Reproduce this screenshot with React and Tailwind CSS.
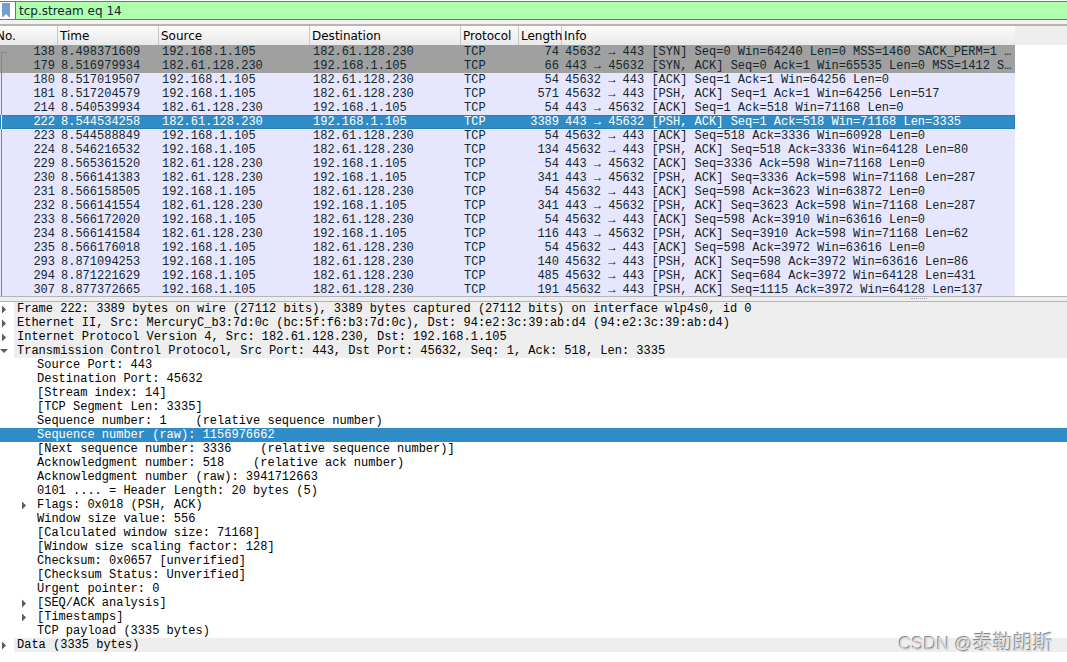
import React, { useState } from 'react';

const A = '192.168.1.105';
const B = '182.61.128.230';

const packets = [
  { no: 138, time: '8.498371609', src: A, dst: B, length: 74, info: '45632 → 443 [SYN] Seq=0 Win=64240 Len=0 MSS=1460 SACK_PERM=1 …', syn: true },
  { no: 179, time: '8.516979934', src: B, dst: A, length: 66, info: '443 → 45632 [SYN, ACK] Seq=0 Ack=1 Win=65535 Len=0 MSS=1412 S…', syn: true },
  { no: 180, time: '8.517019507', src: A, dst: B, length: 54, info: '45632 → 443 [ACK] Seq=1 Ack=1 Win=64256 Len=0' },
  { no: 181, time: '8.517204579', src: A, dst: B, length: 571, info: '45632 → 443 [PSH, ACK] Seq=1 Ack=1 Win=64256 Len=517' },
  { no: 214, time: '8.540539934', src: B, dst: A, length: 54, info: '443 → 45632 [ACK] Seq=1 Ack=518 Win=71168 Len=0' },
  { no: 222, time: '8.544534258', src: B, dst: A, length: 3389, info: '443 → 45632 [PSH, ACK] Seq=1 Ack=518 Win=71168 Len=3335' },
  { no: 223, time: '8.544588849', src: A, dst: B, length: 54, info: '45632 → 443 [ACK] Seq=518 Ack=3336 Win=60928 Len=0' },
  { no: 224, time: '8.546216532', src: A, dst: B, length: 134, info: '45632 → 443 [PSH, ACK] Seq=518 Ack=3336 Win=64128 Len=80' },
  { no: 229, time: '8.565361520', src: B, dst: A, length: 54, info: '443 → 45632 [ACK] Seq=3336 Ack=598 Win=71168 Len=0' },
  { no: 230, time: '8.566141383', src: B, dst: A, length: 341, info: '443 → 45632 [PSH, ACK] Seq=3336 Ack=598 Win=71168 Len=287' },
  { no: 231, time: '8.566158505', src: A, dst: B, length: 54, info: '45632 → 443 [ACK] Seq=598 Ack=3623 Win=63872 Len=0' },
  { no: 232, time: '8.566141554', src: B, dst: A, length: 341, info: '443 → 45632 [PSH, ACK] Seq=3623 Ack=598 Win=71168 Len=287' },
  { no: 233, time: '8.566172020', src: A, dst: B, length: 54, info: '45632 → 443 [ACK] Seq=598 Ack=3910 Win=63616 Len=0' },
  { no: 234, time: '8.566141584', src: B, dst: A, length: 116, info: '443 → 45632 [PSH, ACK] Seq=3910 Ack=598 Win=71168 Len=62' },
  { no: 235, time: '8.566176018', src: A, dst: B, length: 54, info: '45632 → 443 [ACK] Seq=598 Ack=3972 Win=63616 Len=0' },
  { no: 293, time: '8.871094253', src: A, dst: B, length: 140, info: '45632 → 443 [PSH, ACK] Seq=598 Ack=3972 Win=63616 Len=86' },
  { no: 294, time: '8.871221629', src: A, dst: B, length: 485, info: '45632 → 443 [PSH, ACK] Seq=684 Ack=3972 Win=64128 Len=431' },
  { no: 307, time: '8.877372665', src: A, dst: B, length: 191, info: '45632 → 443 [PSH, ACK] Seq=1115 Ack=3972 Win=64128 Len=137' },
];

const details = [
  { text: 'Frame 222: 3389 bytes on wire (27112 bits), 3389 bytes captured (27112 bits) on interface wlp4s0, id 0', root: true, arrow: 'closed' },
  { text: 'Ethernet II, Src: MercuryC_b3:7d:0c (bc:5f:f6:b3:7d:0c), Dst: 94:e2:3c:39:ab:d4 (94:e2:3c:39:ab:d4)', root: true, arrow: 'closed' },
  { text: 'Internet Protocol Version 4, Src: 182.61.128.230, Dst: 192.168.1.105', root: true, arrow: 'closed' },
  { text: 'Transmission Control Protocol, Src Port: 443, Dst Port: 45632, Seq: 1, Ack: 518, Len: 3335', root: true, arrow: 'open' },
  { text: 'Source Port: 443' },
  { text: 'Destination Port: 45632' },
  { text: '[Stream index: 14]' },
  { text: '[TCP Segment Len: 3335]' },
  { text: 'Sequence number: 1    (relative sequence number)' },
  { text: 'Sequence number (raw): 1156976662' },
  { text: '[Next sequence number: 3336    (relative sequence number)]' },
  { text: 'Acknowledgment number: 518    (relative ack number)' },
  { text: 'Acknowledgment number (raw): 3941712663' },
  { text: '0101 .... = Header Length: 20 bytes (5)' },
  { text: 'Flags: 0x018 (PSH, ACK)', arrow: 'closed' },
  { text: 'Window size value: 556' },
  { text: '[Calculated window size: 71168]' },
  { text: '[Window size scaling factor: 128]' },
  { text: 'Checksum: 0x0657 [unverified]' },
  { text: '[Checksum Status: Unverified]' },
  { text: 'Urgent pointer: 0' },
  { text: '[SEQ/ACK analysis]', arrow: 'closed' },
  { text: '[Timestamps]', arrow: 'closed' },
  { text: 'TCP payload (3335 bytes)' },
  { text: 'Data (3335 bytes)', root: true, arrow: 'closed' },
];

const columns = ['No.', 'Time', 'Source', 'Destination', 'Protocol', 'Length', 'Info'];

function FilterBar() {
  const [filter, setFilter] = useState('tcp.stream eq 14');

  return (
    <div className="mt-px flex h-[19px] border-y border-[#77727a] bg-[#afffaf]">
      <button type="button" aria-label="Filter bookmarks" className="w-4 shrink-0 border-r border-[#77727a] bg-white">
        <svg width="15" height="17" viewBox="0 0 15 17">
          <path d="M2 1h8v14H9l-3-3-3 3H2z" fill="#729fcf" />
        </svg>
      </button>
      <input
        type="text"
        aria-label="Display filter"
        value={filter}
        onChange={(e) => setFilter(e.target.value)}
        className="min-w-0 flex-1 bg-transparent px-[3px] font-['DejaVu_Sans',sans-serif] text-xs leading-4 text-[#12272e] outline-none"
      />
    </div>
  );
}

function StreamLine({ first, selected }) {
  const color = selected ? 'border-white' : 'border-[#80868f]';
  if (first) {
    return <span className={`absolute bottom-0 left-px h-[7px] w-1.5 border-t border-l ${color}`} />;
  }
  return <span className={`absolute inset-y-0 left-px border-l ${color}`} />;
}

function PacketRow({ packet, first, selected, onSelect }) {
  let tone = 'bg-[#e7e6ff] text-[#12272e]';
  if (packet.syn) tone = 'bg-[#a0a0a0] text-[#12272e]';
  if (selected) tone = 'bg-[#308cc6] text-white outline -outline-offset-1 outline-[#2b7eb2]';

  return (
    <tr className={`h-3.5 align-top ${tone}`} onClick={onSelect} aria-selected={selected}>
      <td className="relative px-[3px] text-right">
        <StreamLine first={first} selected={selected} />
        {packet.no}
      </td>
      <td className="px-[3px]">{packet.time}</td>
      <td className="px-[3px]">{packet.src}</td>
      <td className="px-[3px]">{packet.dst}</td>
      <td className="px-[3px]">TCP</td>
      <td className="px-[3px] text-right">{packet.length}</td>
      <td className="truncate pl-[3px]">{packet.info}</td>
    </tr>
  );
}

function PacketList() {
  const [selected, setSelected] = useState(222);

  return (
    <div className="flex h-[270px] overflow-hidden">
      <div className="min-w-0 flex-1">
        <table className="w-full table-fixed border-collapse font-['Liberation_Mono',monospace] text-xs leading-[14px] whitespace-nowrap">
          <colgroup>
            <col className="w-[58px]" />
            <col className="w-[101px]" />
            <col className="w-[151px]" />
            <col className="w-[151px]" />
            <col className="w-[58px]" />
            <col className="w-[43px]" />
            <col />
          </colgroup>
          <thead>
            <tr className="h-[19px] bg-linear-to-b from-[#fcfcfc] to-[#e9e9e9] font-['DejaVu_Sans',sans-serif] leading-4 text-black">
              {columns.map((name) => (
                <th
                  key={name}
                  scope="col"
                  className="overflow-hidden pl-0.5 text-left font-normal shadow-[inset_-1px_0_0_#c8c8c8] first:-indent-[6px] last:shadow-none"
                >
                  {name}
                </th>
              ))}
            </tr>
          </thead>
          <tbody>
            {packets.map((packet, i) => (
              <PacketRow
                key={packet.no}
                packet={packet}
                first={i === 0}
                selected={packet.no === selected}
                onSelect={() => setSelected(packet.no)}
              />
            ))}
          </tbody>
        </table>
      </div>
      <div className="w-[52px] shrink-0">
        <div className="h-[19px] bg-[#eeeeee]" />
      </div>
    </div>
  );
}

function Arrow({ state }) {
  return (
    <button type="button" aria-label={state === 'open' ? 'Collapse' : 'Expand'} className="block">
      <svg width="8" height="14" viewBox="0 0 8 14" fill="#5c5c5c">
        {state === 'open' ? <path d="M0 5h8L4 9z" /> : <path d="M2 3.5v8l4-4z" />}
      </svg>
    </button>
  );
}

function DetailRow({ item, selected, onSelect }) {
  let tone = 'text-black';
  if (selected) tone = 'bg-[#308cc6] text-white';

  return (
    <li role="treeitem" aria-selected={selected} onClick={onSelect} className={`flex h-3.5 ${tone}`}>
      <span className={item.root ? 'w-3.5 shrink-0' : 'w-[34px] shrink-0 pl-5'}>
        {item.arrow && <Arrow state={item.arrow} />}
      </span>
      <span className={`flex-1 pl-[3px] whitespace-pre ${item.root ? 'bg-[#eeeeee]' : ''}`}>{item.text}</span>
    </li>
  );
}

function PacketDetails() {
  const [selected, setSelected] = useState(9);

  return (
    <ul role="tree" className="font-['Liberation_Mono',monospace] text-xs leading-[14px]">
      {details.map((item, i) => (
        <DetailRow key={item.text} item={item} selected={i === selected} onSelect={() => setSelected(i)} />
      ))}
    </ul>
  );
}

function Splitter() {
  return (
    <div className="flex h-1.5 justify-center border-y border-[#b4b4b4] bg-[#eeeeee] pl-[770px]">
      <span className="mt-px h-px w-4 border-t border-dotted border-[#a8a8a8]" />
    </div>
  );
}

export default function App() {
  return (
    <main className="relative min-h-screen overflow-hidden bg-white">
      <FilterBar />
      <div className="h-1.5 border-b-2 border-[#b6b6b6] bg-[#f2f2f2]" />
      <PacketList />
      <Splitter />
      <PacketDetails />
      <div className="absolute right-3.5 bottom-1 font-['Liberation_Sans','Noto_Sans_CJK_SC',sans-serif] text-lg leading-7 text-[#d8d8d8] [text-shadow:-1px_-1px_0_#8a8a8a]">
        CSDN @<span className="text-xl leading-7">泰勒朗斯</span>
      </div>
    </main>
  );
}
